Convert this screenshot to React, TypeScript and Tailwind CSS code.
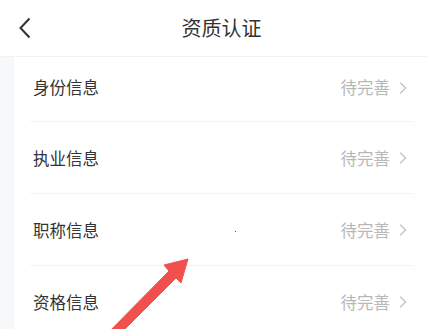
import React from "react";

const rows = [
  { label: "身份信息", h: "h-[64px]", pad: "pb-[3px]" },
  { label: "执业信息", h: "h-[71px]", pad: "pt-[1px]" },
  { label: "职称信息", h: "h-[71px]", pad: "pt-[1px]" },
  { label: "资格信息", h: "h-[71px]", pad: "pt-[1px]" },
];

function Chevron() {
  return (
    <svg width="8" height="12" viewBox="0 0 8 12" className="ml-[9px]">
      <path d="M1.5 1 L6.5 6 L1.5 11" fill="none" stroke="#c4c4c4" strokeWidth="1.4" strokeLinecap="round" strokeLinejoin="round" />
    </svg>
  );
}

export default function App() {
  return (
    <div
      className="relative w-[427px] h-[329px] overflow-hidden bg-white"
      style={{ fontFamily: '"Noto Sans CJK SC", "Noto Sans", sans-serif' }}
    >
      <div className="h-[57px] flex items-center border-b border-[#f2f2f2]">
        <div className="w-[50px] pl-[18px] flex items-center">
          <svg width="14" height="22" viewBox="0 0 14 22">
            <path d="M11.5 1.5 L2.5 11 L11.5 20.5" fill="none" stroke="#333" strokeWidth="2" strokeLinejoin="miter" />
          </svg>
        </div>
        <div className="flex-1 flex justify-center pr-[34px]">
          <span className="text-[20px] text-[#333] leading-none">资质认证</span>
        </div>
      </div>
      <div className="flex h-[272px]">
        <div className="w-[14px] bg-[#f7f8fa]" />
        <div className="flex-1 flex flex-col">
          {rows.map((r, i) => (
            <div key={r.label}>
              <div className={`${r.h} ${r.pad} flex items-center justify-between pl-[19px] pr-[20px]`}>
                <span className="text-[16.5px] text-[#333] leading-none">{r.label}</span>
                <div className="flex items-center">
                  <span className="text-[16.5px] text-[#b8b8b8] leading-none">待完善</span>
                  <Chevron />
                </div>
              </div>
              {i < rows.length - 1 && <div className="h-px bg-[#f3f3f3] ml-[16px] mr-[13px]" />}
            </div>
          ))}
        </div>
      </div>
      <div className="absolute left-[235px] top-[231px] w-px h-px bg-[#555]" />
      <svg className="absolute left-0 top-0" width="427" height="329" viewBox="0 0 427 329">
        <polygon
          points="188,259 181,283 176,278 114,340 101,340 169,271 164,265"
          fill="#f0514d"
          stroke="#f0514d"
          strokeWidth="1"
          strokeLinejoin="round"
        />
      </svg>
    </div>
  );
}
